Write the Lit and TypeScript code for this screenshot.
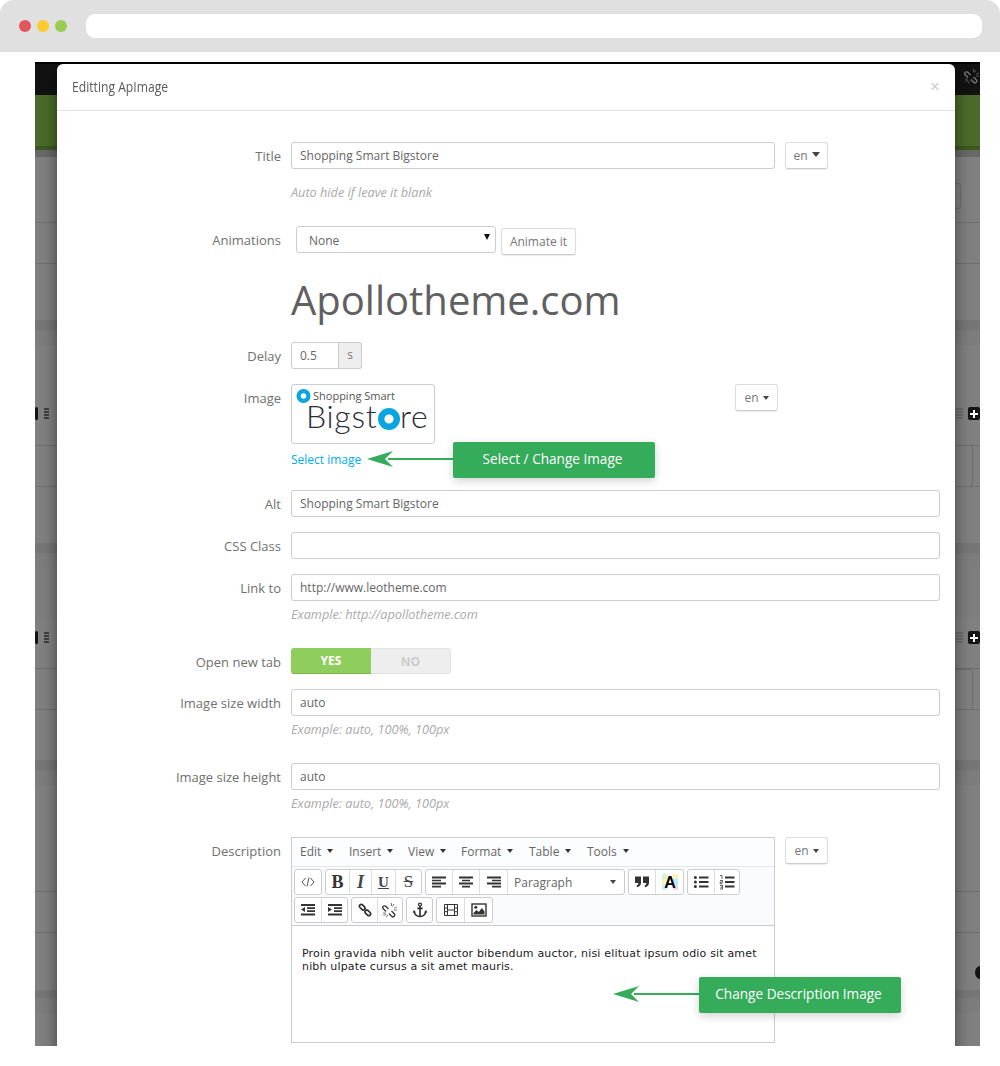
import { LitElement, html, css, svg } from "lit";
import { customElement } from "lit/decorators.js";

const bands = [
  [2, "#000"], [31, "#121212"], [51, "#4a6b2b"], [4, "#3c5a1f"], [7, "#696969"],
  [65, "#808080"], [1, "#6e6e6e"], [40, "#808080"], [1, "#6e6e6e"], [56, "#808080"],
  [10, "#767676"], [15, "#7d7d7d"], [100, "#808080"], [1, "#6e6e6e"], [40, "#808080"],
  [1, "#6e6e6e"], [56, "#808080"], [10, "#767676"], [15, "#7d7d7d"], [49, "#7e7e7e"],
  [51, "#808080"], [1, "#6e6e6e"], [40, "#808080"], [1, "#6e6e6e"], [50, "#808080"],
  [10, "#767676"], [15, "#7d7d7d"], [106, "#808080"], [1, "#6e6e6e"], [40, "#808080"],
  [1, "#6e6e6e"], [57, "#808080"], [8, "#767676"], [15, "#7d7d7d"], [200, "#808080"],
];

const bits = [
  { x: 912, y: 121, w: 14, h: 26, c: "ghost" },
  { x: 912, y: 383, w: 26, h: 42, c: "ghost" },
  { x: 912, y: 607, w: 26, h: 41, c: "ghost" },
  { x: 0, y: 345, w: 3, h: 13, c: "dark" },
  { x: 0, y: 569, w: 3, h: 13, c: "dark" },
  { x: 9, y: 346, w: 5, h: 2, c: "bar" }, { x: 9, y: 349, w: 5, h: 2, c: "bar" },
  { x: 9, y: 352, w: 5, h: 2, c: "bar" }, { x: 9, y: 355, w: 5, h: 2, c: "bar" },
  { x: 9, y: 570, w: 5, h: 2, c: "bar" }, { x: 9, y: 573, w: 5, h: 2, c: "bar" },
  { x: 9, y: 576, w: 5, h: 2, c: "bar" }, { x: 9, y: 579, w: 5, h: 2, c: "bar" },
  { x: 921, y: 346, w: 7, h: 2, c: "soft" }, { x: 921, y: 349, w: 7, h: 2, c: "soft" },
  { x: 921, y: 352, w: 7, h: 2, c: "soft" }, { x: 921, y: 355, w: 7, h: 2, c: "soft" },
  { x: 921, y: 570, w: 7, h: 2, c: "soft" }, { x: 921, y: 573, w: 7, h: 2, c: "soft" },
  { x: 921, y: 576, w: 7, h: 2, c: "soft" }, { x: 921, y: 579, w: 7, h: 2, c: "soft" },
  { x: 933, y: 345, w: 12, h: 13, c: "dark plus" },
  { x: 933, y: 569, w: 12, h: 13, c: "dark plus" },
  { x: 940, y: 904, w: 10, h: 13, c: "dot" },
];

const I = {
  code: svg`<path d="M5.5 4 2 8l3.5 4M10.5 4 14 8l-3.5 4M9 3.5l-2 9" fill="none" stroke="#555" stroke-width="1"/>`,
  left: svg`<path d="M1 2.5h14v2H1zM1 5.7h9v1.6H1zM1 8.5h14v2H1zM1 11.7h9v1.8H1z"/>`,
  center: svg`<path d="M1 2.5h14v2H1zM4 5.7h8v1.6H4zM1 8.5h14v2H1zM4 11.7h8v1.8H4z"/>`,
  right: svg`<path d="M1 2.5h14v2H1zM6 5.7h9v1.6H6zM1 8.5h14v2H1zM6 11.7h9v1.8H6z"/>`,
  quote: svg`<path d="M1 2.5h6v6.2c0 2.5-1.7 4.3-4.2 4.5v-2c1 -.2 1.6-.9 1.6-2.2H1zM9 2.5h6v6.2c0 2.5-1.7 4.3-4.2 4.5v-2c1-.2 1.6-.9 1.6-2.2H9z"/>`,
  bullist: svg`<circle cx="2.4" cy="3.5" r="1.5"/><circle cx="2.4" cy="8" r="1.5"/><circle cx="2.4" cy="12.5" r="1.5"/><path d="M6 2.5h9.5v2H6zM6 7h9.5v2H6zM6 11.5h9.5v2H6z"/>`,
  numlist: svg`<path d="M6 2.5h9.5v2H6zM6 7h9.5v2H6zM6 11.5h9.5v2H6z"/><path d="M1 1.5h2v3.5M1 6.5h2.5v1.6H1.2v1.6h2.4M1 11.5h2.5v3.5H1M1.5 13.2h2" fill="none" stroke="#333" stroke-width=".8"/>`,
  outdent: svg`<path d="M1 2h14v2H1zM7 5.3h8v1.6H7zM7 8.3h8v1.6H7zM1 11.5h14v2H1zM5 5v5L1 7.5z"/>`,
  indent: svg`<path d="M1 2h14v2H1zM7 5.3h8v1.6H7zM7 8.3h8v1.6H7zM1 11.5h14v2H1zM1 5v5l4-2.5z"/>`,
  link: svg`<g fill="none" stroke="#333" stroke-width="1.7"><rect x="2" y="3.4" width="6.4" height="3.6" rx="1.8" transform="rotate(45 5.2 5.2)"/><rect x="7.6" y="9" width="6.4" height="3.6" rx="1.8" transform="rotate(45 10.8 10.8)"/></g>`,
  unlink: svg`<g fill="none" stroke="#333"><path d="M6.5 7 3.8 4.3a1.7 1.7 0 0 0-2.5 2.5L4 9.5M9.5 9l2.7 2.7a1.7 1.7 0 0 1-2.5 2.5L7 11.5" stroke-width="1.3"/><path d="M9.5 1v3M12 2l-1.5 2.5M14.8 5l-2.6 1.2M15 8h-3M1 11h3M1.5 13.5 4 12.3M4.5 15.3l1-2.6" stroke-width=".7"/></g>`,
  anchor: svg`<g fill="none" stroke="#333"><circle cx="8" cy="2.6" r="1.5" stroke-width="1.3"/><path d="M8 4v10.5M5.3 6.3h5.4" stroke-width="1.7"/><path d="M2.2 9.5c.3 3 2.6 4.8 5.8 5 3.2-.2 5.5-2 5.8-5" stroke-width="1.6"/></g><path d="M.5 10.5 2.2 8l1.7 2.5zM12.1 10.5 13.8 8l1.7 2.5z"/>`,
  media: svg`<path d="M1.5 2.5h13v11h-13zM4.5 2.5v11M11.5 2.5v11M1.5 6h3M1.5 9.7h3M11.5 6h3M11.5 9.7h3M4.5 8h7" fill="none" stroke="#333"/>`,
  image: svg`<rect x="1" y="2" width="14" height="12" fill="none" stroke="#333" stroke-width="1.4"/><path d="M2.5 12.5v-1.5l3-3 2.3 2 3-4 2.7 3.5v3z"/><circle cx="4.8" cy="5.3" r="1.5"/>`,
  color: svg`<path d="M0 0h5v5H0z" fill="#d6f5d0"/><path d="M5 0h6v5H5z" fill="#fff"/><path d="M11 0h5v5h-5z" fill="#fff3b0"/><path d="M11 5h5v6h-5z" fill="#bfe6fb"/><path d="M0 5h5v6H0z" fill="#f3f3c8"/><path d="M0 11h5v5H0z" fill="#cdeefc"/><path d="M5 11h6v5H5z" fill="#fff"/><path d="M11 11h5v5h-5z" fill="#fcd3e0"/><text x="8" y="14" text-anchor="middle" class="a">A</text>`,
};

type Btn = { w: number; icon?: keyof typeof I; t?: string; c?: string };
const row1: Btn[][] = [
  [{ w: 26, icon: "code" }],
  [{ w: 23, t: "B", c: "b" }, { w: 22, t: "I", c: "i" }, { w: 24, t: "U", c: "u" }, { w: 26, t: "S", c: "s" }],
  [{ w: 26, icon: "left" }, { w: 27, icon: "center" }, { w: 28, icon: "right" }, { w: 117, t: "Paragraph", c: "p" }],
  [{ w: 26, icon: "quote" }, { w: 28, icon: "color" }],
  [{ w: 26, icon: "bullist" }, { w: 25, icon: "numlist" }],
];
const row2: Btn[][] = [
  [{ w: 26, icon: "outdent" }, { w: 26, icon: "indent" }],
  [{ w: 25, icon: "link" }, { w: 25, icon: "unlink" }],
  [{ w: 25, icon: "anchor" }],
  [{ w: 27, icon: "media" }, { w: 28, icon: "image" }],
];

const arrow = html`<svg class="arrow" width="86" height="18" viewBox="0 0 86 18"><path d="M86 7H21v2h65zM0 8l26-8-8 8 8 8z" fill="#34ac5a"/></svg>`;

@customElement("app-root")
export class AppRoot extends LitElement {
  static styles = css`
    :host { display: block; width: 1000px; height: 1066px; background: #fff; font-family: "Open Sans", sans-serif; color: #666; overflow: hidden; }
    * { box-sizing: border-box; }
    .chrome { height: 52px; background: #e0e0e0; border-radius: 14px 14px 0 0; display: flex; align-items: center; padding: 0 18px 0 19px; }
    .dot3 { width: 12px; height: 12px; border-radius: 50%; margin-right: 6px; }
    .red { background: #e0575b; } .yellow { background: #fdcb2f; } .green { background: #98cb4f; }
    .url { flex: 1; height: 24px; margin-left: 13px; background: #fff; border-radius: 9px; }
    .stage { position: relative; margin: 10px 20px 0 35px; height: 984px; overflow: hidden; background: #808080; }
    .band { display: block; }
    .bit { position: absolute; }
    .ghost { border: 1px solid #6e6e6e; border-radius: 3px; }
    .dark { background: #141414; border-radius: 2px; }
    .plus { background-color: #141414; background-image: linear-gradient(#fff, #fff), linear-gradient(#fff, #fff); background-repeat: no-repeat; background-size: 8px 2px, 2px 8px; background-position: 2px 5.5px, 5px 2.5px; }
    .bar { background: #3e3e3e; }
    .soft { background: #6c6c6c; }
    .dot { background: #141414; border-radius: 50%; }
    .chain { position: absolute; left: 929px; top: 6px; opacity: .55; filter: invert(1); }
    .modal { position: absolute; left: 22px; top: 2px; width: 898px; height: 1100px; background: #fff; border-radius: 6px 6px 0 0; box-shadow: 0 5px 15px rgba(0,0,0,.5); }
    .head { height: 47px; border-bottom: 1px solid #e5e5e5; display: flex; align-items: center; justify-content: space-between; padding: 0 15px 1px; }
    .title { display: inline-block; transform: scaleX(.81); transform-origin: left center; font-size: 15px; line-height: 20px; margin-bottom: 2px; color: #5a5a5a; }
    .close { font-size: 17px; line-height: 1; color: #ccc; font-family: "Liberation Sans", sans-serif; }
    .form { padding: 31px 15px 0 0; }
    .row { display: flex; align-items: flex-start; margin-bottom: 15px; }
    .label { width: 224px; height: 27px; flex: none; margin-right: 10px; padding-top: 1px; text-align: right; font-size: 13px; line-height: 27px; color: #707070; }
    .ctl { flex: 1; min-width: 0; }
    .line { display: flex; align-items: flex-start; }
    .input { height: 27px; border: 1px solid #ccc; border-radius: 3px; font-size: 12px; line-height: 26px; padding: 0 8px; color: #666; background: #fff; flex: 1; }
    .short { flex: none; width: 484px; }
    .btn { display: flex; align-items: center; justify-content: center; gap: 4px; height: 27px; border: 1px solid #ddd; border-bottom-color: #ccc; border-radius: 3px; box-shadow: 0 1px 1px rgba(0,0,0,.08); font-size: 12px; color: #777; background: #fff; flex: none; }
    .en { width: 43px; margin-left: 10px; }
    .caret { width: 0; height: 0; border-left: 3.5px solid transparent; border-right: 3.5px solid transparent; border-top: 4px solid #444; }
    .big { border-left-width: 4px; border-right-width: 4px; border-top-width: 5px; margin-top: -2px; }
    .help { font-size: 12.7px; line-height: 18px; font-style: italic; color: #aaa; margin-top: 4px; }
    .far { margin-top: 14px; }
    .m25 { margin-bottom: 25px; }
    .m21 { margin-bottom: 21px; }
    .m14 { margin-bottom: 14px; }
    .m0 { margin-bottom: 0; }
    .select { width: 200px; height: 27px; margin-left: 5px; border: 1px solid #ccc; border-radius: 3px; display: flex; align-items: center; justify-content: space-between; padding: 1px 5px 0 12px; font-size: 12px; color: #666; flex: none; }
    .tri { width: 0; height: 0; border-left: 3.5px solid transparent; border-right: 3.5px solid transparent; border-top: 6px solid #111; margin-top: -6px; }
    .anim { width: 75px; margin: 2px 0 0 5px; }
    .preview { margin: 15px 0 12px 234px; font-size: 40px; line-height: 60px; color: #606060; }
    .delay { width: 48px; flex: none; border-radius: 3px 0 0 3px; }
    .addon { width: 23px; height: 27px; border: 1px solid #ccc; border-left: 0; border-radius: 0 3px 3px 0; background: #eee; text-align: center; font-size: 12px; line-height: 24px; color: #777; }
    .logo { width: 144px; height: 60px; border: 1px solid #ccc; border-radius: 3px; flex: none; }
    .logo svg { display: block; }
    .small { font-family: "Open Sans", sans-serif; font-size: 11px; fill: #555; }
    .big-logo { font-family: Lato, sans-serif; font-weight: 300; font-size: 32px; letter-spacing: .7px; fill: #2b2b38; }
    .en2 { margin-left: 300px; }
    .link { display: block; font-size: 12px; line-height: 18px; margin-top: 7px; color: #00aeef; }
    .toggle { width: 160px; height: 26px; display: flex; border-radius: 3px; overflow: hidden; font-size: 12px; font-weight: 700; text-align: center; line-height: 25px; }
    .yes { width: 80px; background: #8fce5c; color: #fff; border-bottom: 1px solid #7db84c; }
    .no { width: 80px; background: #eee; color: #ccc; border: 1px solid #e2e2e2; border-left: 0; border-radius: 0 3px 3px 0; }
    .editor { width: 484px; height: 206px; border: 1px solid #ccc; flex: none; }
    .menu { height: 29px; display: flex; align-items: center; background: #fcfdfe; border-bottom: 1px solid #e4e6ea; padding: 0 0 2px 8px; font-size: 12px; color: #666; }
    .mi { display: flex; align-items: center; gap: 6px; }
    .mi .caret { border-top-color: #333; }
    .tools { height: 59px; background: #f9fbfe; border-bottom: 1px solid #ccc; padding: 2px 2px 0; }
    .trow { display: flex; gap: 3px; height: 26px; margin-bottom: 2px; }
    .grp { display: flex; border: 1px solid #ccc; border-radius: 3px; background: #fff; height: 26px; }
    .tb { display: flex; align-items: center; justify-content: center; flex: none; border-left: 1px solid #ddd; fill: #333; color: #333; font-size: 16px; }
    .tb:first-child { border-left: 0; }
    .b, .i, .u, .s { font-family: "Liberation Serif", serif; }
    .b { font-weight: 700; font-size: 18px; }
    .i { font-style: italic; font-weight: 700; font-size: 18px; color: #444; }
    .u { text-decoration: underline; font-weight: 700; font-size: 15px; color: #444; }
    .s { text-decoration: line-through; font-size: 17px; color: #444; }
    .p { justify-content: space-between; padding: 0 8px 0 6px; font-family: "Open Sans", sans-serif; font-size: 12px; color: #666; }
    .a { font-family: "Liberation Sans", sans-serif; font-size: 16px; font-weight: 700; fill: #000; }
    .body { padding: 21px 10px 0; font-family: "DejaVu Sans", sans-serif; font-size: 11px; letter-spacing: .17px; line-height: 13px; color: #222; }
    .callout { position: absolute; display: flex; align-items: center; }
    .c1 { left: 310px; top: 378px; }
    .c2 { left: 556px; top: 913px; }
    .arrow { flex: none; display: block; }
    .pill { width: 202px; height: 36px; padding: 0 3px 3px 0; background: #34ac5a; color: #fff; border-radius: 2px; box-shadow: 0 3px 10px rgba(0,0,0,.18); display: flex; align-items: center; justify-content: center; font-size: 13.6px; }
  `;

  private field(label: string, value: string, help?: string, cls = "") {
    return html`<div class="row ${cls}"><div class="label">${label}</div><div class="ctl">
      <div class="line"><div class="input">${value}</div></div>
      ${help ? html`<div class="help">${help}</div>` : ""}
    </div></div>`;
  }

  private group(g: Btn[]) {
    return html`<div class="grp">${g.map(
      (b) => html`<div class="tb ${b.c ?? ""}" style="width:${b.w}px">
        ${b.icon ? html`<svg width="16" height="16" viewBox="0 0 16 16">${I[b.icon]}</svg>` : ""}
        ${b.c === "p" ? html`<span>${b.t}</span><span class="caret"></span>` : b.t ?? ""}
      </div>`
    )}</div>`;
  }

  render() {
    return html`
      <div class="chrome">
        <span class="dot3 red"></span><span class="dot3 yellow"></span><span class="dot3 green"></span>
        <div class="url"></div>
      </div>
      <div class="stage">
        ${bands.map(([h, c]) => html`<div class="band" style="height:${h}px;background:${c}"></div>`)}
        ${bits.map((b) => html`<div class="bit ${b.c}" style="left:${b.x}px;top:${b.y}px;width:${b.w}px;height:${b.h}px"></div>`)}
        <svg class="chain" width="16" height="16" viewBox="0 0 16 16">${I.unlink}</svg>
        <div class="modal">
          <div class="head"><span class="title">Editting ApImage</span><span class="close">×</span></div>
          <div class="form">
            <div class="row m25"><div class="label">Title</div><div class="ctl">
              <div class="line"><div class="input short">Shopping Smart Bigstore</div>
                <div class="btn en">en<span class="caret big"></span></div></div>
              <div class="help far">Auto hide if leave it blank</div>
            </div></div>
            <div class="row m0"><div class="label">Animations</div>
              <div class="line"><div class="select">None<span class="tri"></span></div><div class="btn anim">Animate it</div></div></div>
            <div class="preview">Apollotheme.com</div>
            <div class="row"><div class="label">Delay</div><div class="line"><div class="input delay">0.5</div><div class="addon">s</div></div></div>
            <div class="row m21"><div class="label">Image</div><div class="ctl">
              <div class="line">
                <div class="logo"><svg width="142" height="58" viewBox="0 0 142 58">
                  <circle cx="11.5" cy="11" r="4.9" fill="#fff" stroke="#08a5e0" stroke-width="4.2"/>
                  <text x="21" y="15" class="small">Shopping Smart</text>
                  <text x="14" y="43" class="big-logo">Bigst</text>
                  <circle cx="97" cy="34" r="7.8" fill="#fff" stroke="#08a5e0" stroke-width="6.4"/>
                  <text x="108" y="43" class="big-logo">re</text>
                </svg></div>
                <div class="btn en en2">en<span class="caret"></span></div>
              </div>
              <span class="link">Select image</span>
            </div></div>
            ${this.field("Alt", "Shopping Smart Bigstore")}
            ${this.field("CSS Class", "")}
            ${this.field("Link to", "http://www.leotheme.com", "Example: http://apollotheme.com", "m25")}
            <div class="row m14"><div class="label">Open new tab</div><div class="toggle"><div class="yes">YES</div><div class="no">NO</div></div></div>
            ${this.field("Image size width", "auto", "Example: auto, 100%, 100px", "m25")}
            ${this.field("Image size height", "auto", "Example: auto, 100%, 100px", "m25")}
            <div class="row"><div class="label">Description</div>
              <div class="editor">
                <div class="menu">
                  ${[["Edit", 49], ["Insert", 59], ["View", 53], ["Format", 68], ["Table", 58], ["Tools", 50]].map(
                    ([t, w]) => html`<div class="mi" style="width:${w}px">${t}<span class="caret"></span></div>`
                  )}
                </div>
                <div class="tools">
                  <div class="trow">${row1.map((g) => this.group(g))}</div>
                  <div class="trow">${row2.map((g) => this.group(g))}</div>
                </div>
                <div class="body">Proin gravida nibh velit auctor bibendum auctor, nisi elituat ipsum odio sit amet nibh ulpate cursus a sit amet mauris.</div>
              </div>
              <div class="btn en">en<span class="caret"></span></div>
            </div>
          </div>
          <div class="callout c1">${arrow}<div class="pill">Select / Change Image</div></div>
          <div class="callout c2">${arrow}<div class="pill">Change Description Image</div></div>
        </div>
      </div>
    `;
  }
}
